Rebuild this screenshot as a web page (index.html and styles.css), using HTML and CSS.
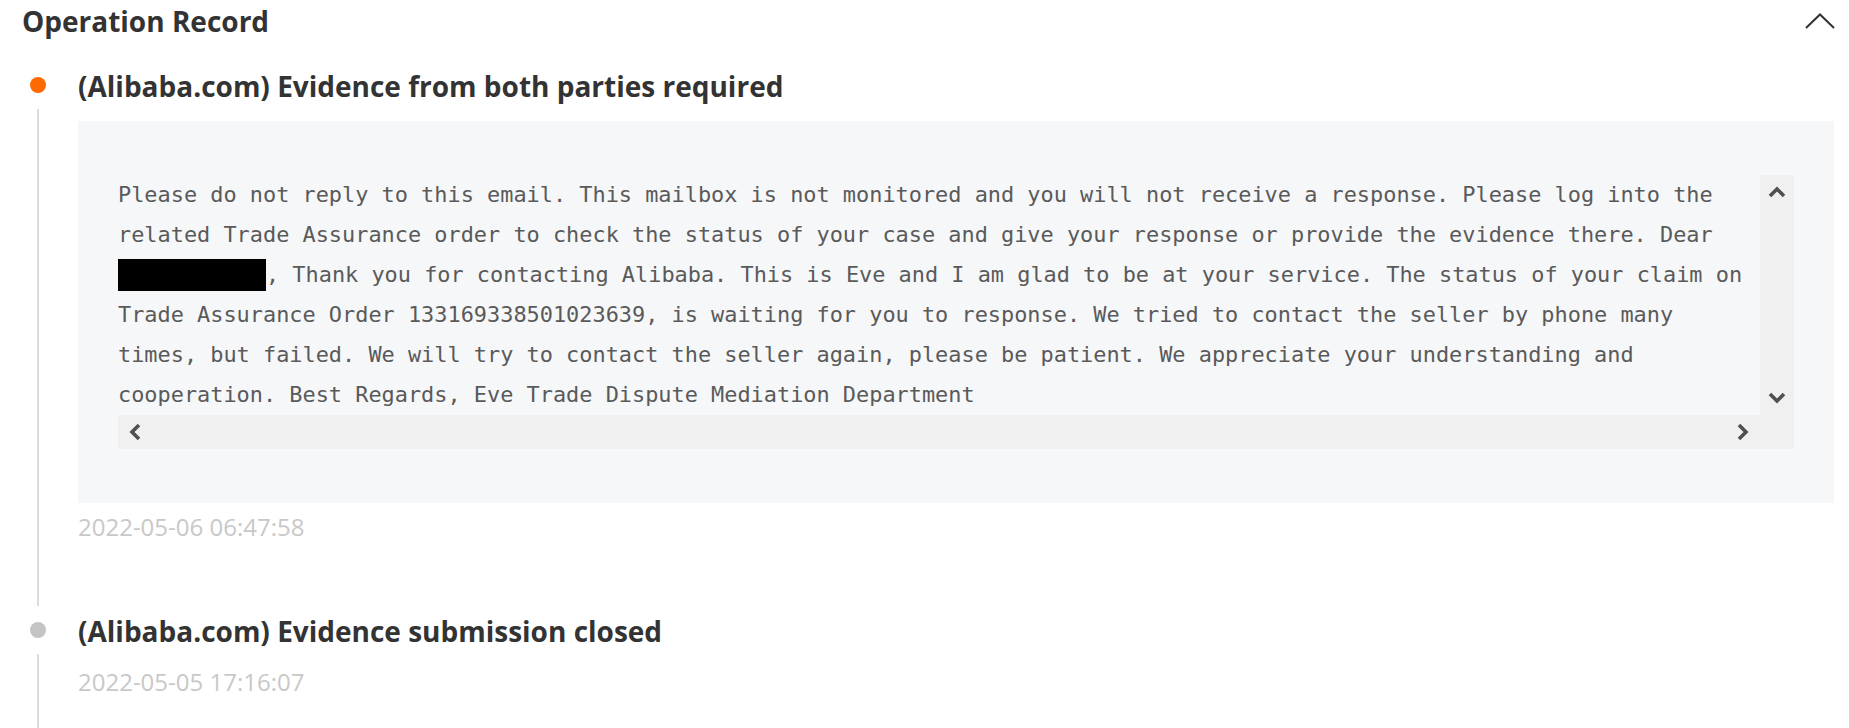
FILE: index.html
```html
<!DOCTYPE html>
<html lang="en">
<head>
<meta charset="utf-8">
<title>Operation Record</title>
<link rel="stylesheet" href="styles.css">
</head>
<body>
<div class="page">
  <header class="header">
    <h2 class="header-title">Operation Record</h2>
    <button class="collapse" aria-label="Collapse">
      <svg width="30" height="16" viewBox="0 0 30 16"><polyline points="1,15 15,1.5 29,15" fill="none" stroke="#333" stroke-width="2"/></svg>
    </button>
  </header>

  <ol class="timeline">
    <li class="item">
      <div class="rail">
        <span class="dot dot-active"></span>
        <span class="line"></span>
      </div>
      <div class="content">
        <h3 class="item-title">(Alibaba.com) Evidence from both parties required</h3>
        <div class="card">
          <div class="scroller">
            <div class="scroller-text">Please do not reply to this email. This mailbox is not monitored and you will not receive a response. Please log into the related Trade Assurance order to check the status of your case and give your response or provide the evidence there. Dear <span class="redact"></span>, Thank you for contacting Alibaba. This is Eve and I am glad to be at your service. The status of your claim on Trade Assurance Order 133169338501023639, is waiting for you to response. We tried to contact the seller by phone many times, but failed. We will try to contact the seller again, please be patient. We appreciate your understanding and cooperation. Best Regards, Eve Trade Dispute Mediation Department</div>
            <div class="vbar">
              <span class="sb-btn"><svg width="18" height="12" viewBox="0 0 18 12"><polyline points="2,10 9,3 16,10" fill="none" stroke="#505050" stroke-width="3.6"/></svg></span>
              <span class="sb-btn"><svg width="18" height="12" viewBox="0 0 18 12"><polyline points="2,2 9,9 16,2" fill="none" stroke="#505050" stroke-width="3.6"/></svg></span>
            </div>
            <div class="hbar">
              <span class="sb-btn"><svg width="12" height="18" viewBox="0 0 12 18"><polyline points="10,2 3,9 10,16" fill="none" stroke="#505050" stroke-width="3.6"/></svg></span>
              <span class="sb-btn"><svg width="12" height="18" viewBox="0 0 12 18"><polyline points="2,2 9,9 2,16" fill="none" stroke="#505050" stroke-width="3.6"/></svg></span>
            </div>
            <div class="corner"></div>
          </div>
        </div>
        <div class="time">2022-05-06 06:47:58</div>
      </div>
    </li>
    <li class="item">
      <div class="rail">
        <span class="dot"></span>
        <span class="line"></span>
      </div>
      <div class="content">
        <h3 class="item-title">(Alibaba.com) Evidence submission closed</h3>
        <div class="time">2022-05-05 17:16:07</div>
      </div>
    </li>
  </ol>
</div>
</body>
</html>
```
FILE: styles.css
```css
* { box-sizing: border-box; }
html, body { margin: 0; padding: 0; background: #fff; }
body {
  font-family: "Open Sans", "Noto Sans", sans-serif;
  color: #333;
  overflow: hidden;
}
.page { padding-top: 5px; }

.header {
  display: flex;
  align-items: center;
  justify-content: space-between;
  padding: 0 14px 0 22px;
  height: 32px;
}
.header-title {
  margin: 0;
  font-size: 28px;
  font-weight: 700;
  line-height: 32px;
  color: #333;
}
.collapse {
  border: 0;
  background: none;
  padding: 0;
  width: 30px;
  height: 16px;
  display: flex;
  margin-top: -1px;
}

.timeline {
  list-style: none;
  margin: 33px 0 0;
  padding: 0;
}
.item {
  display: flex;
  align-items: stretch;
}
.rail {
  width: 46px;
  padding-left: 30px;
  padding-top: 7px;
  display: flex;
  flex-direction: column;
  align-items: center;
  flex: none;
}
.dot {
  width: 16px;
  height: 16px;
  border-radius: 50%;
  background: #c4c4c4;
  flex: none;
}
.dot-active { background: #ff6a00; }
.line {
  width: 2px;
  flex: 1;
  background: #dcdcdc;
  margin-top: 16px;
  margin-bottom: 9px;
}
.item:last-child .line { margin-bottom: 0; }

.content {
  flex: 1;
  margin-left: 32px;
  padding-right: 15px;
  padding-bottom: 74px;
  min-width: 0;
}
.item:last-child .content { padding-bottom: 40px; }
.item-title {
  margin: 0;
  font-size: 28px;
  font-weight: 700;
  line-height: 32px;
  color: #333;
}
.card {
  margin: 19px 0 10px;
  background: #f6f7f9;
  padding: 54px 40px;
}
.scroller {
  display: grid;
  grid-template-columns: 1fr 34px;
  grid-template-rows: 240px 34px;
}
.scroller-text {
  font-family: "DejaVu Sans Mono", "Liberation Mono", monospace;
  font-size: 21.9px;
  line-height: 40px;
  color: #5a5a5a;
  overflow: hidden;
  white-space: normal;
}
.redact {
  display: inline-block;
  width: 160px;
  height: 32px;
  margin-left: -12px;
  background: #000;
  vertical-align: -9px;
}
.vbar {
  background: #f0f0f0;
  display: flex;
  flex-direction: column;
  justify-content: space-between;
}
.hbar {
  background: #f0f0f0;
  display: flex;
  justify-content: space-between;
}
.corner { background: #f0f0f0; }
.sb-btn {
  width: 34px;
  height: 34px;
  display: flex;
  align-items: center;
  justify-content: center;
}
.time {
  font-size: 24px;
  line-height: 28px;
  color: #c8c8c8;
}
.item-title + .time { margin-top: 21px; }
```
